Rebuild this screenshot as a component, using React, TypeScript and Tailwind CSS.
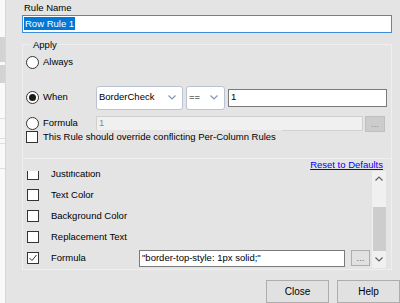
import React from 'react'

const Radio = ({ checked }: { checked?: boolean }) => (
  <span className="w-[13px] h-[13px] rounded-full border border-[#333333] bg-white flex items-center justify-center shrink-0">
    {checked && <span className="w-[7px] h-[7px] rounded-full bg-[#1a1a1a]" />}
  </span>
)

const Check = ({ checked }: { checked?: boolean }) => (
  <span className="w-[12px] h-[12px] border border-[#333333] bg-white flex items-center justify-center shrink-0">
    {checked && (
      <svg width="10" height="10" viewBox="0 0 10 10">
        <path d="M1.5 5 L4 7.5 L8.5 2" stroke="#333333" strokeWidth="1" fill="none" />
      </svg>
    )}
  </span>
)

const Chevron = ({ up, color = '#8696ae' }: { up?: boolean; color?: string }) => (
  <svg width="8" height="5" viewBox="0 0 8 5">
    <path d={up ? 'M0.5 4.5 L4 1 L7.5 4.5' : 'M0.5 0.5 L4 4 L7.5 0.5'} stroke={color} strokeWidth="1.2" fill="none" />
  </svg>
)

const Select = ({ value, width }: { value: string; width: string }) => (
  <div className={`${width} h-full bg-white border border-[#b9c3d1] rounded-[3px] flex items-center justify-between pl-[2px] pr-[6px]`}>
    <span>{value}</span>
    <Chevron />
  </div>
)

const listRows = ['Justification', 'Text Color', 'Background Color', 'Replacement Text']

export default function App() {
  return (
    <div
      className="w-[400px] h-[303px] flex bg-[#e4e4e4] overflow-hidden text-[9.5px] text-black"
      style={{ fontFamily: '"Liberation Sans", Arial, sans-serif' }}
    >
      {/* left list edge */}
      <div className="w-[6px] shrink-0 bg-[#f9f9f9] border-r border-[#d6d6d6] flex flex-col">
        <div className="h-[37px]" />
        <div className="h-[25px] bg-[#d3d3d3]" />
        <div className="h-[3px]" />
        <div className="h-[18px] bg-[#d3d3d3]" />
        <div className="h-[35px]" />
        <div className="h-px bg-[#dedede]" />
        <div className="h-[19px]" />
        <div className="h-px bg-[#dedede]" />
        <div className="h-[4px]" />
        <div className="h-px bg-[#dedede]" />
        <div className="h-[24px]" />
        <div className="h-px bg-[#dedede]" />
      </div>

      <div className="flex-1 flex flex-col pl-[16px] pr-[8px]">
        <div className="h-[15px] leading-[15px] pl-[2px]">Rule Name</div>
        <div className="h-[18px] bg-white border border-[#3d8ddb] flex items-center pl-[1px]">
          <span className="bg-[#0078d7] text-white leading-[13px] px-[1px]">Row Rule 1</span>
        </div>

        <fieldset className="mt-[6px] border border-[#efefef] pl-[3px] pb-[14px]">
          <legend className="ml-[5px] px-[2px] leading-[12px]">Apply</legend>

          <div className="h-[24px] flex items-center gap-[4px]">
            <Radio />
            <span>Always</span>
          </div>

          <div className="mt-[11px] h-[24px] flex items-center">
            <div className="w-[70px] flex items-center gap-[4px]">
              <Radio checked />
              <span>When</span>
            </div>
            <Select value="BorderCheck" width="w-[87px]" />
            <div className="w-[3px]" />
            <Select value="==" width="w-[39px]" />
            <div className="w-[3px]" />
            <div className="w-[159px] h-[18px] bg-white border border-[#7a7a7a] pl-[2px] flex items-center">1</div>
          </div>

          <div className="mt-[6px] h-[16px] flex items-center">
            <div className="w-[70px] flex items-center gap-[4px]">
              <Radio />
              <span>Formula</span>
            </div>
            <div className="w-[267px] h-[15px] bg-[#f0f0f0] border border-[#d0d0d0] pl-[2px] text-[#8a8a8a] flex items-center">1</div>
            <div className="w-[2px]" />
            <div className="w-[20px] h-[16px] bg-[#cccccc] border border-[#c0c0c0] text-[#8a8a8a] flex items-center justify-center leading-none">...</div>
          </div>

          <div className="-mt-[1px] h-[13px] flex items-center gap-[5px]">
            <Check />
            <span className="bg-[#e4e4e4] pr-[6px]">This Rule should override conflicting Per-Column Rules</span>
          </div>
        </fieldset>

        <div className="h-[115px] border-x border-b border-[#efefef] flex flex-col">
          <div className="h-[12px] flex items-center justify-end pr-[8px]">
            <span className="text-[#0000ff] underline leading-[12px]">Reset to Defaults</span>
          </div>
          <div className="h-[97px] flex pl-[4px] pr-[5px]">
            <div className="flex-1 overflow-hidden">
              <div className="-mt-[7px] flex flex-col">
                {listRows.map((r) => (
                  <div key={r} className="h-[21px] flex items-center gap-[12px]">
                    <Check />
                    <span>{r}</span>
                  </div>
                ))}
                <div className="h-[21px] flex items-center">
                  <div className="w-[112px] flex items-center gap-[12px]">
                    <Check checked />
                    <span>Formula</span>
                  </div>
                  <div className="w-[206px] h-[17px] bg-white border border-[#7a7a7a] pl-[2px] flex items-center">
                    "border-top-style: 1px solid;"
                  </div>
                  <div className="w-[6px]" />
                  <div className="w-[19px] h-[16px] bg-[#e1e1e1] border border-[#adadad] text-[#6a6a6a] flex items-center justify-center leading-none">...</div>
                </div>
              </div>
            </div>
            <div className="w-[14px] bg-[#f0f0f0] flex flex-col items-center">
              <div className="h-[17px] flex items-center justify-center">
                <Chevron up color="#606060" />
              </div>
              <div className="mt-[20px] w-[13px] h-[46px] bg-[#cdcdcd]" />
              <div className="flex-1" />
              <div className="h-[17px] flex items-center justify-center">
                <Chevron color="#606060" />
              </div>
            </div>
          </div>
        </div>

        <div className="mt-[10px] -mr-[8px] flex justify-end gap-[8px]">
          <div className="w-[63px] h-[23px] bg-[#e1e1e1] border border-[#adadad] flex items-center justify-center text-[10px]">Close</div>
          <div className="w-[63px] h-[23px] bg-[#e1e1e1] border border-[#adadad] flex items-center justify-center text-[10px]">Help</div>
        </div>
      </div>
    </div>
  )
}
